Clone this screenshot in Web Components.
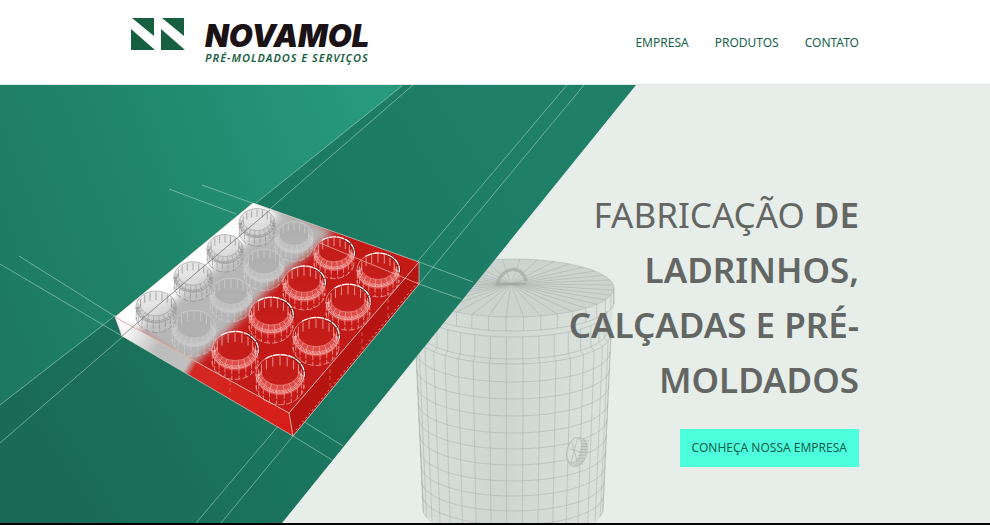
<!DOCTYPE html>
<html lang="pt-BR">
<head>
<meta charset="utf-8">
<meta name="viewport" content="width=device-width, initial-scale=1">
<title>Novamol Pré-Moldados e Serviços</title>
<style>
  body { margin: 0; background: #000; font-family: "Noto Sans", "Open Sans", sans-serif; --green: #17624b; --page: 728px; }
</style>
</head>
<body>
<nova-page>
  <nova-header slot="header">
    <nova-logo name="NOVAMOL" tagline="PRÉ-MOLDADOS E SERVIÇOS"></nova-logo>
    <nova-nav>
      <nova-link href="#empresa">EMPRESA</nova-link>
      <nova-link href="#produtos">PRODUTOS</nova-link>
      <nova-link href="#contato">CONTATO</nova-link>
    </nova-nav>
  </nova-header>
  <nova-hero>
    <nova-artwork slot="art"></nova-artwork>
    <nova-title slot="title">FABRICAÇÃO <b>DE LADRINHOS, CALÇADAS E PRÉ-MOLDADOS</b></nova-title>
    <nova-cta slot="action" href="#empresa">CONHEÇA NOSSA EMPRESA</nova-cta>
  </nova-hero>
</nova-page>

<script>
class Base extends HTMLElement {
  connectedCallback() {
    if (this.shadowRoot) return;
    this.attachShadow({ mode: 'open' }).innerHTML = this.view();
  }
}

customElements.define('nova-page', class extends Base {
  view() {
    return `<style>
      :host { display: flex; flex-direction: column; min-height: 100vh; box-sizing: border-box; padding-bottom: 2px; }
      main { flex: 1; display: grid; }
    </style><slot name="header"></slot><main><slot></slot></main>`;
  }
});

customElements.define('nova-header', class extends Base {
  view() {
    return `<style>
      :host { display: block; background: #fff; border-bottom: 1px solid #dfe9e5; }
      header { display: flex; justify-content: space-between; align-items: center; max-width: var(--page); min-height: 84px; margin: 0 auto; }
    </style><header><slot></slot></header>`;
  }
});

customElements.define('nova-logo', class extends Base {
  view() {
    return `<style>
      :host { display: block; }
      a { display: flex; align-items: flex-start; gap: 20px; color: #1a1214; text-decoration: none; }
      svg { display: block; width: 54px; height: 32px; fill: #17603f; }
      span { display: grid; padding-top: 4px; }
      b { font: italic 900 31px/28px Inter, sans-serif; }
      small { font: italic 600 11px/16px "Noto Sans", sans-serif; letter-spacing: 1px; color: #17603f; white-space: nowrap; }
    </style>
    <a href="#">
      <svg viewBox="0 0 54 32" aria-hidden="true"><path d="M1 0H23V18ZM0 11V32H24ZM31 0H53V18ZM30 11V32H54Z"/></svg>
      <span><b>${this.getAttribute('name')}</b><small>${this.getAttribute('tagline')}</small></span>
    </a>`;
  }
});

customElements.define('nova-nav', class extends Base {
  view() {
    return `<style>:host { display: block; } nav { display: flex; gap: 26px; padding-bottom: 2px; }</style><nav><slot></slot></nav>`;
  }
});

customElements.define('nova-link', class extends Base {
  view() {
    return `<style>
      :host { display: block; }
      a { font-size: 12px; line-height: 20px; font-weight: 450; color: var(--green); text-decoration: none; }
    </style><a href="${this.getAttribute('href')}"><slot></slot></a>`;
  }
});

customElements.define('nova-hero', class extends Base {
  view() {
    return `<style>
      :host { display: grid; background: #e7eeea; overflow: hidden; }
      section { display: grid; position: relative; }
      .copy { position: relative; box-sizing: border-box; width: 100%; max-width: var(--page); margin: 0 auto; padding: 102px 0 56px;
              display: flex; flex-direction: column; align-items: flex-end; gap: 22px; }
    </style>
    <section><slot name="art"></slot>
      <div class="copy"><slot name="title"></slot><slot name="action"></slot></div>
    </section>`;
  }
});

customElements.define('nova-title', class extends Base {
  view() {
    return `<style>
      :host { display: block; max-width: 340px; }
      h1 { margin: 0; font-size: 35px; line-height: 55px; font-weight: 450; text-align: right; color: #646664; }
      ::slotted(b) { font-weight: 650; }
    </style><h1><slot></slot></h1>`;
  }
});

customElements.define('nova-cta', class extends Base {
  view() {
    return `<style>
      :host { display: block; }
      a { display: block; padding: 9px 12px; font-size: 12px; line-height: 20px; font-weight: 400; color: #17604f; background: #4dffdc; text-decoration: none; }
    </style><a href="${this.getAttribute('href')}"><slot></slot></a>`;
  }
});

/* Hero illustration: angled green panels, a wireframe paving block and a wireframe tank. */
customElements.define('nova-artwork', class extends Base {
  line(x1, y1, x2, y2, extra = '') {
    return `<path d="M${x1.toFixed(1)} ${y1.toFixed(1)}L${x2.toFixed(1)} ${y2.toFixed(1)}" ${extra}/>`;
  }

  stud(cx, cy, r, kind) {
    const ry = r * .8, drop = r * .48, ix = r * .8, iy = ry * .74, hy = cy - 3;
    const ink = kind === 'white' ? '#858585' : kind === 'gray' ? '#dedede' : '#ffdcd8';
    const hole = kind === 'white' ? '#dcdcdc' : kind === 'gray' ? '#a9a9a9' : '#c4201c';
    const wall = kind === 'white' ? '#cfcfcf' : kind === 'gray' ? '#b2b2b2' : '#c91d1a';
    const rim = kind === 'white' ? '#cbcbcb' : kind === 'gray' ? '#c9c9c9' : '#f0706a';
    let s = `<path d="M${cx - r} ${cy}V${cy + drop}A${r} ${ry} 0 0 0 ${cx + r} ${cy + drop}V${cy}Z" fill="${wall}" fill-opacity=".35" stroke="none"/>`;
    s += `<ellipse cx="${cx}" cy="${cy}" rx="${r}" ry="${ry}" fill="${wall}" fill-opacity=".4" stroke-opacity=".7"/>`;
    s += `<path d="M${cx - r} ${cy + 2}A${r} ${ry} 0 0 0 ${cx + r} ${cy + 2}L${cx + ix} ${hy}A${ix} ${iy} 0 0 1 ${cx - ix} ${hy}Z" fill="${rim}" fill-opacity=".6" stroke="none"/>`;
    s += `<ellipse cx="${cx}" cy="${hy}" rx="${ix}" ry="${iy}" fill="${hole}" fill-opacity=".5" stroke="none"/>`;
    s += `<path d="M${cx - ix} ${hy}A${ix} ${iy} 0 0 0 ${cx + ix} ${hy}" stroke-opacity=".5" fill="none"/>`;
    for (let a = 194; a < 352; a += 19) {
      const t = a * Math.PI / 180, x = cx + r * .92 * Math.cos(t), y = cy + ry * .94 * Math.sin(t);
      s += this.line(x, y, x, y + r * .4, 'stroke-opacity=".75"');
    }
    for (const k of [.86, .93, 1])
      s += `<path d="M${cx - r * k} ${cy}A${r * k} ${ry * k} 0 0 0 ${cx + r * k} ${cy}" fill="none" stroke-dasharray="2.4 .9" stroke-opacity=".75"/>`;
    for (let a = 8; a < 175; a += 18) {
      const t = a * Math.PI / 180, c = Math.cos(t), n = Math.sin(t);
      s += this.line(cx + r * c, cy + 1 + ry * n, cx + r * c, cy + drop + ry * n, 'stroke-opacity=".65" stroke-dasharray="5 1.5"');
      s += this.line(cx + ix * c, hy + iy * n, cx + r * c, cy + ry * n, 'stroke-opacity=".5"');
    }
    s += `<path d="M${cx - r} ${cy + drop}A${r} ${ry} 0 0 0 ${cx + r} ${cy + drop}" fill="none" stroke-dasharray="6 2" stroke-opacity=".65"/>`;
    if (kind === 'red') {
      s += `<path d="M${cx + r * .5} ${cy - ry * .87}A${r} ${ry} 0 0 1 ${cx + r} ${cy + 3}" fill="none" stroke="#3f0d0b" stroke-width="2.6" stroke-opacity=".6"/>`;
      s += `<path d="M${cx - r * .6} ${cy - ry * .8}A${r} ${ry} 0 0 1 ${cx + r} ${cy + 3}" fill="none" stroke="#fff" stroke-width="1.2" stroke-dasharray="7 .8"/>`;
    }
    return `<g stroke="${ink}" stroke-width=".8"${kind === 'gray' ? ' opacity=".8"' : ''}>${s}</g>`;
  }

  tank() {
    const cx = 513, pt = (a, rx, ry, y) => [cx + rx * Math.cos(a), y + ry * Math.sin(a)];
    let s = '';
    const arc = (rx, ry, y) => `<path d="M${cx - rx} ${y}A${rx} ${ry} 0 0 0 ${cx + rx} ${y}" fill="none"/>`;
    const ribs = (rx1, ry1, y1, rx2, ry2, y2) => {
      for (let d = 4; d < 180; d += 10) {
        const a = d * Math.PI / 180;
        s += this.line(...pt(a, rx1, ry1, y1), ...pt(a, rx2, ry2, y2));
      }
    };
    s += '<path d="M412 288A101 29 0 0 1 614 288V304L610 334L603 512Q590 532 513 542Q440 535 423 512L415 334L412 304Z" fill="url(#tk)" stroke="none"/>';
    s += `<ellipse cx="${cx}" cy="288" rx="101" ry="29" fill="#ccd4d0" stroke="#a4aaa7"/>`;
    for (let d = 4; d < 360; d += 10) s += this.line(511, 284, ...pt(d * Math.PI / 180, 101, 29, 288));
    s += arc(101, 29, 302) + arc(94, 26, 311) + arc(94, 28, 331) + arc(98, 30, 334);
    ribs(101, 29, 288, 101, 29, 302);
    ribs(94, 26, 311, 94, 28, 331);
    ribs(94, 28, 331, 98, 30, 334);
    [352, 369, 386, 403, 419, 435, 451, 466, 481, 495, 509].forEach(y => { s += arc(98 - (y - 334) * .045, 30, y); });
    ribs(98, 30, 334, 90, 30, 509);
    s += '<path d="M614 288V304M412 288V304M415 334L423 509M611 334L603 509" fill="none"/>';
    s += '<path d="M497 286C500 267 522 263 526 281" fill="none" stroke="#a5aba8" stroke-width="3.4"/><path d="M498 284H526" stroke-width="2"/>';
    s += '<g transform="rotate(15 577 452)"><ellipse cx="577" cy="452" rx="10" ry="15" fill="#c8d0cc"/><ellipse cx="574" cy="451" rx="7" ry="13" fill="#d8dfdb"/>';
    for (let y = 440; y < 466; y += 3) s += this.line(579, y, 586, y - 2);
    s += '<path d="M568 451H581M574 439V464M569 443L579 460"/></g>';
    return `<g stroke="#a0a7a4" stroke-width=".6" stroke-opacity=".75">${s}</g>`;
  }

  view() {
    const studs = [
      ['white', 257, 223, 18], ['gray', 294, 237, 19], ['white', 225, 249, 18], ['red', 334, 253, 20],
      ['gray', 264, 265, 20], ['red', 378, 270, 21], ['white', 193, 277, 19], ['red', 304, 283, 21],
      ['gray', 231, 295, 21], ['red', 348, 302, 22], ['white', 156, 307, 20], ['red', 271, 315, 22],
      ['gray', 194, 328, 22], ['red', 316, 336, 23], ['red', 235, 350, 23], ['red', 280, 374, 24]
    ].map(([k, x, y, r]) => this.stud(x, y, r, k)).join('');
    const guides = 'M413 85L0 443M402 86L256 203M567 85L196 523M584 85L221 523M202 185L252 203M169 189L236 214M419 262L473 282M419 284L461 299M19 256L116 317M0 264L122 336M290 413L343 446M293 436L332 460M116 315L0 405';
    return `<style>
      :host { display: block; position: absolute; inset: 0; }
      svg { display: block; width: 100%; height: 100%; }
    </style>
    <svg viewBox="0 85 990 438" preserveAspectRatio="xMidYMid slice" aria-hidden="true">
      <defs>
        <linearGradient id="up" gradientUnits="userSpaceOnUse" x1="0" y1="300" x2="380" y2="160"><stop offset="0" stop-color="#1d7a61"/><stop offset=".5" stop-color="#21886d"/><stop offset="1" stop-color="#27997e"/></linearGradient>
        <linearGradient id="band" gradientUnits="userSpaceOnUse" x1="30" y1="500" x2="560" y2="150"><stop offset="0" stop-color="#196956"/><stop offset=".5" stop-color="#1b7861"/><stop offset="1" stop-color="#1f7f67"/></linearGradient>
        <linearGradient id="tk"><stop offset="0" stop-color="#d9e0dc"/><stop offset=".45" stop-color="#ced6d2"/><stop offset="1" stop-color="#dde4e0"/></linearGradient>
        <linearGradient id="front" gradientUnits="userSpaceOnUse" x1="115" y1="320" x2="293" y2="425">
          <stop offset=".08" stop-color="#f7f7f7"/><stop offset=".25" stop-color="#bcbcbc"/><stop offset=".41" stop-color="#c0c0c0"/><stop offset=".45" stop-color="#d32822"/><stop offset="1" stop-color="#d81d17"/>
        </linearGradient>
        <clipPath id="face"><path d="M253 203L419 262L289 413L115 317Z"/></clipPath>
        <filter id="soft" x="-20%" y="-20%" width="140%" height="140%"><feGaussianBlur stdDeviation="4"/></filter>
      </defs>
      <rect y="85" width="990" height="438" fill="#e7eeea"/>
      ${this.tank()}
      <path d="M0 85H636L282 523H0Z" fill="url(#band)"/>
      <path d="M0 85H403L256 203L116 315L0 405Z" fill="url(#up)"/>
      <path d="${guides}" fill="none" stroke="#b9e0d3" stroke-width=".8" stroke-opacity=".65"/>
      <path d="M115 317L289 413L293 436L122 336Z" fill="url(#front)"/>
      <path d="M289 413L419 262V284L293 436Z" fill="#b51410"/>
      <g clip-path="url(#face)">
        <path d="M253 203L419 262L289 413L115 317Z" fill="#c41a17"/>
        <path d="M240 180L334 232L278 280L232 328L192 366L100 310Z" fill="#b7b7b7" filter="url(#soft)"/>
        <path d="M250 192L280 216L215 268L130 336L95 315Z" fill="#fff" filter="url(#soft)"/>
      </g>
      ${studs}
      <path d="M253 203L419 262V284L293 436L122 336L115 317Z" fill="none" stroke="#e8dedb" stroke-opacity=".6"/>
      <path d="M115 317L289 413L419 262M289 413L293 436" fill="none" stroke="#f1b5b0" stroke-width=".9"/>
      <path d="M122 336L270 210" stroke="#777" stroke-width=".8"/>
      <path d="M320 243L419 284" stroke="#f2bbb6" stroke-width=".7"/>
      <path d="M296 430L418 282" stroke="#efc9c4" stroke-opacity=".7" stroke-dasharray="2 3"/>
      <path d="M330 362V386M362 325V350M388 292V318M230 392V382" stroke="#e2726d" stroke-width=".7" stroke-dasharray="4 3"/>
    </svg>`;
  }
});
</script>
</body>
</html>
